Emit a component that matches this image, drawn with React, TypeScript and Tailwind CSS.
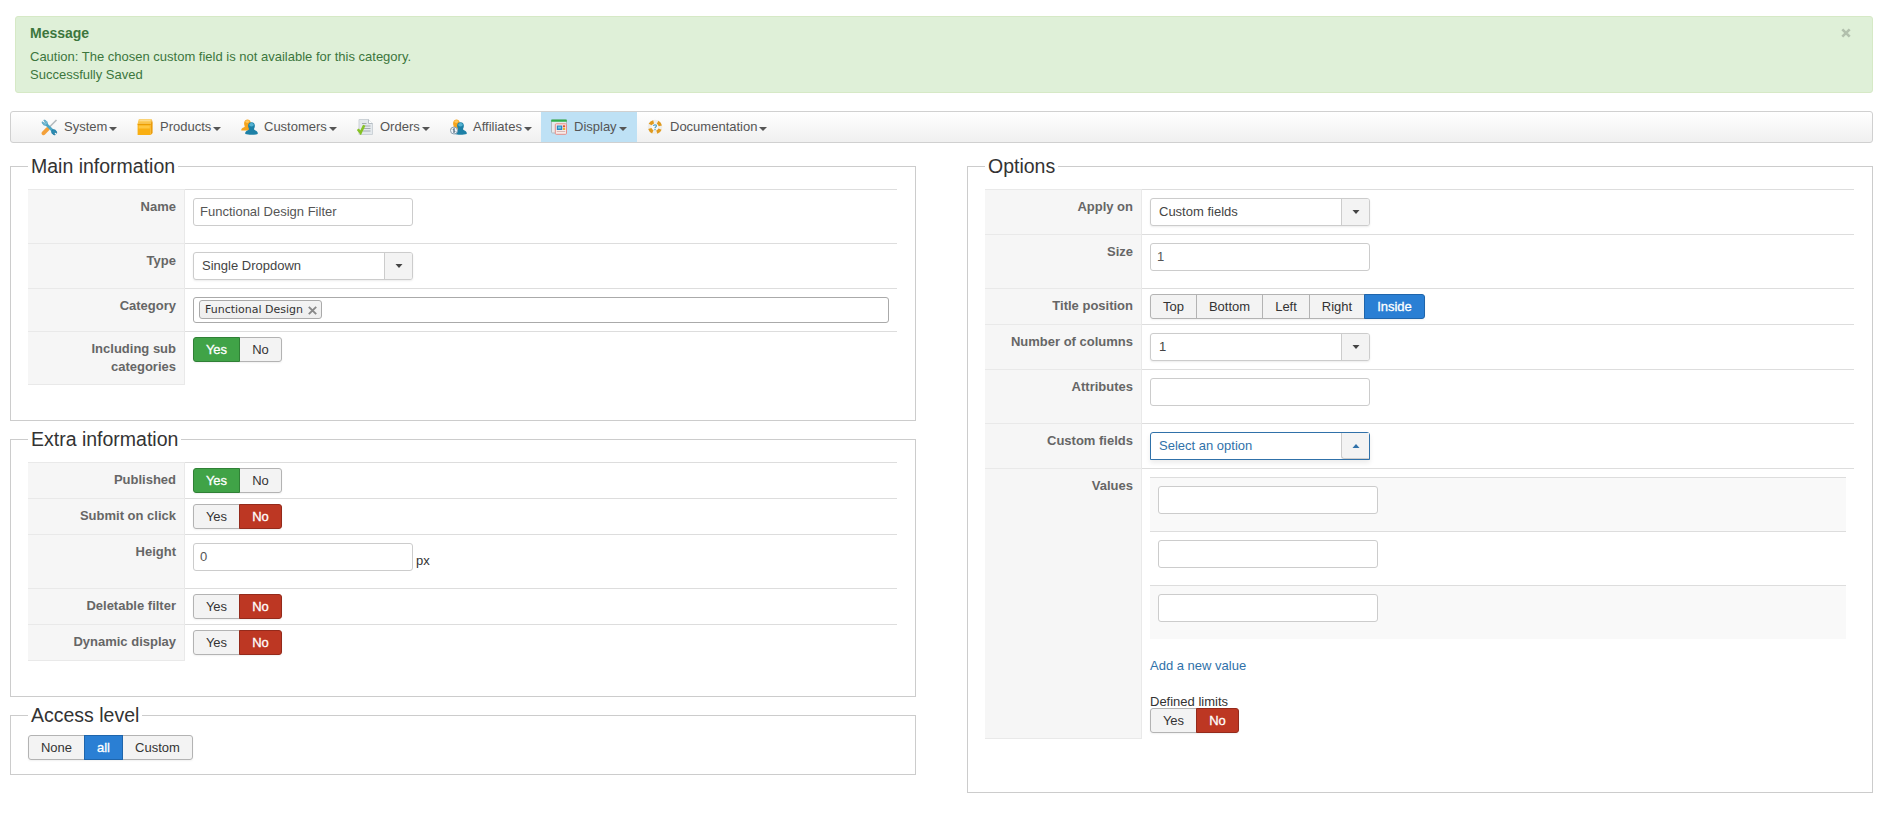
import React from "react";

type Tone = "green" | "red" | "blue";

const toneClass: Record<Tone, string> = {
  green: "bg-[#40a347] border-[#308036] text-white",
  red: "bg-[#bd3723] border-[#942a1b] text-white",
  blue: "bg-[#2a7fd4] border-[#1f65ab] text-white",
};

function ButtonGroup({ items }: { items: { label: string; w: string; tone?: Tone }[] }) {
  return (
    <div className="flex h-[25px] w-max rounded-[3px] shadow-[0_1px_2px_rgba(0,0,0,0.06)]">
      {items.map((it, i) => (
        <button
          key={it.label}
          className={`${it.w} h-[25px] border text-center text-[13px] leading-[23px] ${i > 0 ? "-ml-px" : "rounded-l-[3px]"} ${
            i === items.length - 1 ? "rounded-r-[3px]" : ""
          } ${it.tone ? `relative z-10 [-webkit-text-stroke:0.3px_white] ${toneClass[it.tone]}` : "border-[#b3b3b3] bg-[#f3f3f3] text-[#333]"}`}
        >
          {it.label}
        </button>
      ))}
    </div>
  );
}

function YesNo({ value }: { value: boolean }) {
  return (
    <ButtonGroup
      items={[
        { label: "Yes", w: "w-[47px]", tone: value ? "green" : undefined },
        { label: "No", w: "w-[43px]", tone: value ? undefined : "red" },
      ]}
    />
  );
}

function TextBox({ value = "" }: { value?: string }) {
  return (
    <div className="h-7 w-[220px] rounded-[3px] border border-[#ccc] bg-white pl-[6px] text-[13px] leading-[26px] text-[#555]">
      {value}
    </div>
  );
}

function Select({ value, open = false }: { value: string; open?: boolean }) {
  return (
    <div
      className={`flex h-7 w-[220px] border bg-white text-[13px] leading-[26px] ${
        open
          ? "rounded-t-[3px] border-[#3071a9] text-[#3071a9] shadow-[0_3px_5px_rgba(0,0,0,0.08)]"
          : "rounded-[3px] border-[#ccc] text-[#444] shadow-[0_1px_2px_rgba(0,0,0,0.08)]"
      }`}
    >
      <span className="flex-1 pl-2">{value}</span>
      <span
        className={`flex w-7 items-center justify-center border-l border-[#ccc] bg-[#f3f3f3] ${
          open ? "rounded-bl-[3px] border-b" : "rounded-r-[2px]"
        }`}
      >
        <svg width="8" height="4" viewBox="0 0 8 4" className={open ? "fill-[#3071a9]" : "fill-[#444]"}>
          {open ? <path d="M0.5 4 4 0 7.5 4z" /> : <path d="M0.5 0 4 4 7.5 0z" />}
        </svg>
      </span>
    </div>
  );
}

function Panel({ title, size, children }: { title: string; size: string; children: React.ReactNode }) {
  return (
    <fieldset className={`${size} border border-[#ccc] pr-[18px] pl-[17px]`}>
      <legend className="h-[21px] px-[3px] text-[19.5px] leading-[21px] text-[#333]">{title}</legend>
      {children}
    </fieldset>
  );
}

function Row({ label, h, last, pt, children }: { label: string; h: string; last?: boolean; pt: string; children: React.ReactNode }) {
  return (
    <div className={`flex ${h}`}>
      <div
        className={`w-[157px] shrink-0 border-t border-r border-[#e9e9e9] bg-[#f6f6f6] pt-2 pr-2 pl-5 text-right text-[13px] leading-[18px] font-bold text-[#666] ${
          last ? "border-b" : ""
        }`}
      >
        {label}
      </div>
      <div className={`flex-1 border-t border-[#ddd] px-2 ${pt}`}>{children}</div>
    </div>
  );
}

function ToolsIcon() {
  return (
    <svg width="17" height="17" viewBox="0 0 17 17" fill="none">
      <path d="M15.500 1 8 8.500" stroke="#b4babd" strokeWidth="1.600" />
      <path d="M6.500 10.200 2.600 14.200" stroke="#f3a03a" strokeWidth="4" strokeLinecap="round" />
      <path d="M4 4 13 13" stroke="#4ba6c6" strokeWidth="2.600" />
      <path d="M1.200 2.800C1 5.500 3.500 7 6 5.800 7 3.500 5.500 1 2.800 1.200L4.300 3.200 3.200 4.300z" fill="#7fc0d8" stroke="#4b9dbd" strokeWidth=".9" />
      <path d="M15.600 14.200C16 11.500 13.500 10 11 11.200 10 13.500 11.500 16 14.200 15.800L12.900 14 14 12.900z" fill="#2d8eb5" stroke="#1f7ba1" strokeWidth=".9" />
    </svg>
  );
}

function BoxIcon() {
  return (
    <svg width="16" height="16" viewBox="0 0 16 16">
      <path d="M1.800.3H14.800L13.800 4.800H.6z" fill="#fbc64a" />
      <path d="M2.500 1.200H13.600L13.400 2.200H2.200z" fill="#ffe3a0" />
      <path d="M14.800.3 15.600 3.500V14l-1.800 2V4.800z" fill="#ea9c0c" />
      <rect x=".6" y="4.800" width="13.200" height="11.200" fill="#f9af12" />
      <rect x=".6" y="4.800" width="13.200" height="1" fill="#e89a00" />
      <rect x="1.600" y="6.500" width="11.200" height="3" fill="#ffc740" />
    </svg>
  );
}

function UsersIcon({ badge = false }: { badge?: boolean }) {
  return (
    <svg width="17" height="16" viewBox="0 0 17 16">
      <path d="M.3 11.500C0 8.500 3.600 8.700 3.800 7.200 2.500 4.500 3 .4 6.500.4S10.300 4.500 9 7L9.500 11.500z" fill="#f6a41c" />
      <ellipse cx="6.300" cy="2.600" rx="2" ry="1.400" fill="#ffc659" />
      <path d="M4.300 15C3.700 11.300 8 11.800 8 10 6.400 7.300 6.800 3.300 10.500 3.300S14.600 7.300 13 10c0 1.800 4.300 1.300 3.700 5-3 1-9.400 1-12.400 0z" fill="#1d80a6" />
      <ellipse cx="10.500" cy="5.700" rx="2.300" ry="1.700" fill="#54b2d2" />
      {badge && (
        <>
          <circle cx="4" cy="11.500" r="3.500" fill="#eef4f8" stroke="#8aa0b2" />
          <path d="M5 10.200c-1.800-1-2.500.7-1 1.300 1.700.6 1 2.300-1 1.400M4 9.300v4.400" stroke="#47637a" strokeWidth=".8" fill="none" />
        </>
      )}
    </svg>
  );
}

function OrderIcon() {
  return (
    <svg width="16" height="16" viewBox="0 0 16 16" fill="none">
      <path d="M2 .5h9.500L15.500 4.500v11H2z" fill="#e4e9ed" stroke="#ccd2d7" />
      <path d="M11.500.5v4h4" fill="#fff" stroke="#b5bdc4" />
      <path d="M5 4.500h4.500M6 7h7.500M6 9.500h7.500M6 12h7.500" stroke="#a4acb2" />
      <path d="M.8 10.200 3.600 13.800 7.200 6.200" stroke="#86c226" strokeWidth="2.600" />
    </svg>
  );
}

function DisplayIcon() {
  return (
    <svg width="16" height="16" viewBox="0 0 16 16">
      <rect x=".5" y="1" width="15" height="13" rx="1" fill="#e6eaec" stroke="#b0b9bf" />
      <rect x=".2" y=".6" width="15.600" height="2.200" rx=".5" fill="#2fae4b" />
      <rect x="4.300" y="4.800" width="11.200" height="10.500" rx="1" fill="#f7ebe9" stroke="#e58d88" />
      <rect x="5.800" y="6.500" width="5.500" height="4.500" fill="#2f86c4" />
      <rect x="7" y="7.600" width="3" height="2" fill="#6fd0e0" />
      <rect x="12" y="6.300" width="2.200" height="2" fill="#e3562c" />
      <rect x="12" y="9" width="2.200" height="2" fill="#e8b32c" />
      <rect x="5.800" y="12" width="8.400" height="1" fill="#d9b7b4" />
    </svg>
  );
}

function HelpIcon() {
  return (
    <svg width="16" height="16" viewBox="0 0 16 16" fill="none">
      <circle cx="8" cy="8" r="5.400" stroke="#efede8" strokeWidth="3.800" />
      <circle
        cx="8"
        cy="8"
        r="5.400"
        stroke="#e09a1e"
        strokeWidth="3.400"
        strokeDasharray="4.300 4.182"
        strokeDashoffset="-2.090"
      />
      <path d="M6.400 6.900C6.500 5.400 9.500 5.400 9.400 7 9.300 8 8 8 8 9.200M8 10v1.200" stroke="#4f9fc0" strokeWidth="1.200" />
    </svg>
  );
}

const menu = [
  { label: "System", icon: <ToolsIcon />, w: "w-[96px]" },
  { label: "Products", icon: <BoxIcon />, w: "w-[104px]" },
  { label: "Customers", icon: <UsersIcon />, w: "w-[116px]" },
  { label: "Orders", icon: <OrderIcon />, w: "w-[93px]" },
  { label: "Affiliates", icon: <UsersIcon badge />, w: "w-[101px]" },
  { label: "Display", icon: <DisplayIcon />, w: "w-[96px]", active: true },
  { label: "Documentation", icon: <HelpIcon />, w: "w-[140px]" },
];

export default function App() {
  return (
    <div className="h-[814px] w-[1889px] overflow-hidden bg-white pt-4 font-['Liberation_Sans',Arial,sans-serif] text-[13px] leading-[18px] text-[#333]">
      <div className="mr-4 ml-[15px] flex h-[77px] justify-between rounded-[3px] border border-[#d6e9c6] bg-[#dff0d8] pt-[7px] pr-[21px] pl-[14px] text-[#3c763d]">
        <div>
          <h4 className="mb-[6px] text-[14px] leading-[18px] font-bold">Message</h4>
          <p>Caution: The chosen custom field is not available for this category.</p>
          <p>Successfully Saved</p>
        </div>
        <svg width="10" height="10" viewBox="0 0 10 10" className="mt-[4px]">
          <path d="M1.300 1.300 8.700 8.700M8.700 1.300 1.300 8.700" stroke="#b2c0ad" strokeWidth="2.600" />
        </svg>
      </div>

      <nav className="mt-[18px] mr-4 ml-[10px] flex h-8 rounded-[3px] border border-[#d0d0d0] bg-linear-to-b from-white to-[#f0f0f0] pl-[20px]">
        {menu.map((m) => (
          <a key={m.label} className={`flex ${m.w} h-[30px] items-center pl-[10px] text-[#555] ${m.active ? "bg-[#bee1f5]" : ""}`}>
            <span className="mr-[6px] flex w-[17px] shrink-0">{m.icon}</span>
            {m.label}
            <svg width="8" height="4" viewBox="0 0 8 4" className="mt-[3px] ml-[2px] fill-[#555]">
              <path d="M0 0h8L4 4z" />
            </svg>
          </a>
        ))}
      </nav>

      <div className="mt-[13px] mr-4 ml-[10px] flex justify-between">
        <div className="w-[906px]">
          <Panel title="Main information" size="h-[265px]">
            <div className="pt-3">
              <Row label="Name" h="h-[54px]" pt="pt-2">
                <TextBox value="Functional Design Filter" />
              </Row>
              <Row label="Type" h="h-[45px]" pt="pt-2">
                <Select value="Single Dropdown" />
              </Row>
              <Row label="Category" h="h-[43px]" pt="pt-2">
                <div className="h-[26px] rounded-[3px] border border-[#aaa] pt-[2px] pl-[5px]">
                  <span className="flex h-[19px] w-[123px] items-center justify-between rounded-[3px] border border-[#aaa] bg-linear-to-b from-[#f4f4f4] to-[#eee] pr-1 pl-[5px] font-['DejaVu_Sans',sans-serif] text-[11px] leading-[17px] text-[#333]">
                    Functional Design
                    <svg width="9" height="9" viewBox="0 0 9 9" className="mt-[2px]">
                      <path d="M.8.8 8.200 8.200M8.200.8.8 8.200" stroke="#888" strokeWidth="1.900" />
                    </svg>
                  </span>
                </div>
              </Row>
              <Row label="Including sub categories" h="h-[54px]" pt="pt-[5px]" last>
                <YesNo value />
              </Row>
            </div>
          </Panel>
          <div className="pt-2">
            <Panel title="Extra information" size="h-[268px]">
              <div className="pt-3">
                <Row label="Published" h="h-[36px]" pt="pt-[5px]">
                  <YesNo value />
                </Row>
                <Row label="Submit on click" h="h-[36px]" pt="pt-[5px]">
                  <YesNo value={false} />
                </Row>
                <Row label="Height" h="h-[54px]" pt="pt-2">
                  <div className="flex gap-[3px]">
                    <TextBox value="0" />
                    <span className="mt-[9px]">px</span>
                  </div>
                </Row>
                <Row label="Deletable filter" h="h-[36px]" pt="pt-[5px]">
                  <YesNo value={false} />
                </Row>
                <Row label="Dynamic display" h="h-[37px]" pt="pt-[5px]" last>
                  <YesNo value={false} />
                </Row>
              </div>
            </Panel>
          </div>
          <div className="pt-2">
            <Panel title="Access level" size="h-[70px]">
              <div className="pt-[9px]">
                <ButtonGroup
                  items={[
                    { label: "None", w: "w-[57px]" },
                    { label: "all", w: "w-[39px]", tone: "blue" },
                    { label: "Custom", w: "w-[71px]" },
                  ]}
                />
              </div>
            </Panel>
          </div>
        </div>

        <div className="w-[906px]">
          <Panel title="Options" size="h-[637px]">
            <div className="pt-3">
              <Row label="Apply on" h="h-[45px]" pt="pt-2">
                <Select value="Custom fields" />
              </Row>
              <Row label="Size" h="h-[54px]" pt="pt-2">
                <TextBox value="1" />
              </Row>
              <Row label="Title position" h="h-[36px]" pt="pt-[5px]">
                <ButtonGroup
                  items={[
                    { label: "Top", w: "w-[47px]" },
                    { label: "Bottom", w: "w-[67px]" },
                    { label: "Left", w: "w-[48px]" },
                    { label: "Right", w: "w-[56px]" },
                    { label: "Inside", w: "w-[61px]", tone: "blue" },
                  ]}
                />
              </Row>
              <Row label="Number of columns" h="h-[45px]" pt="pt-2">
                <Select value="1" />
              </Row>
              <Row label="Attributes" h="h-[54px]" pt="pt-2">
                <TextBox />
              </Row>
              <Row label="Custom fields" h="h-[45px]" pt="pt-2">
                <Select value="Select an option" open />
              </Row>
              <Row label="Values" h="h-[271px]" pt="pt-2" last>
                {[0, 1, 2].map((n) => (
                  <div key={n} className={`h-[54px] border-t border-[#ddd] pt-2 pl-2 ${n === 1 ? "" : "bg-[#f9f9f9]"}`}>
                    <TextBox />
                  </div>
                ))}
                <a className="mt-[18px] block text-[#3071a9]">Add a new value</a>
                <div className="mt-[18px] h-[15px]">Defined limits</div>
                <YesNo value={false} />
              </Row>
            </div>
          </Panel>
        </div>
      </div>
    </div>
  );
}
